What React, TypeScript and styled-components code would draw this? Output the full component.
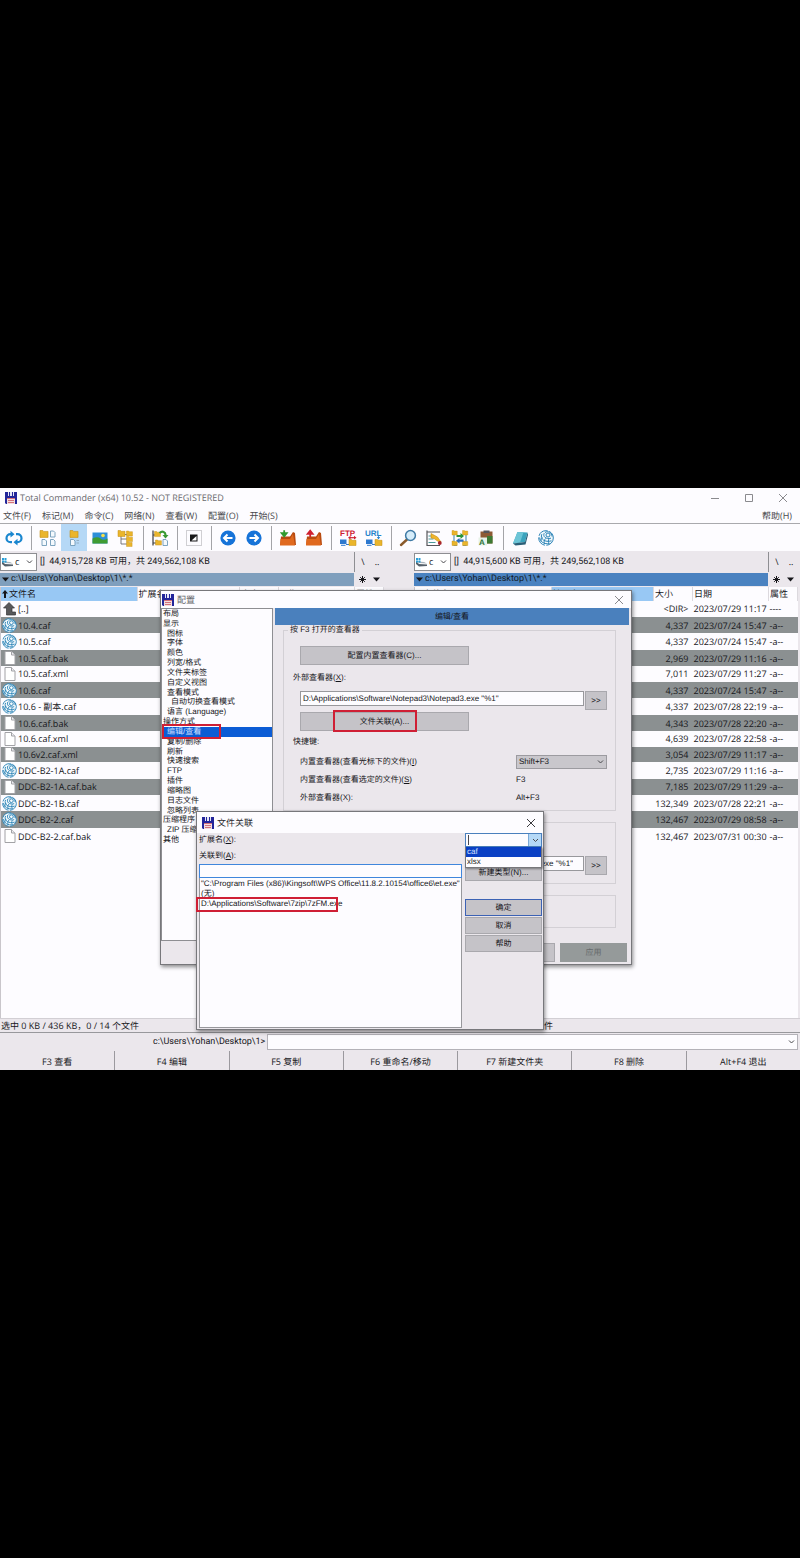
import React from 'react';
import styled, { createGlobalStyle, css } from 'styled-components';

const GlobalStyle = createGlobalStyle`
  * { box-sizing: border-box; }
  body { margin: 0; background: #000; text-rendering: geometricPrecision; }
  button, input, select { font: inherit; color: inherit; margin: 0; padding: 0; border-radius: 0; text-rendering: inherit; }
  svg { display: block; flex: none; }
`;

const Page = styled.div`
  min-height: 100vh;
  display: flex;
  flex-direction: column;
  justify-content: center;
  background: #000;
`;

const AppWindow = styled.main`
  position: relative;
  display: flex;
  flex-direction: column;
  min-width: 800px;
  background: #ebe7ec;
  color: #18181c;
  font: 9px/14px 'Open Sans', 'Noto Sans CJK SC', sans-serif;
  overflow: hidden;
`;

const narrowText = css`
  font-family: Roboto, 'Noto Sans CJK SC', sans-serif;
`;

const TitleBar = styled.header`
  display: flex;
  align-items: center;
  gap: 3px;
  height: 19px;
  padding: 0 12px 0 5px;
  background: #fdfcff;
  color: #6a6a6e;
`;

const WindowTitle = styled.h1`
  flex: 1;
  margin: 0;
  font-size: 9px;
  font-weight: 400;
`;

const WindowControls = styled.div`
  display: flex;
  gap: 24px;
`;

const PlainButton = styled.button`
  display: flex;
  align-items: center;
  justify-content: center;
  background: none;
  border: 0;
`;

const MenuBar = styled.nav`
  display: flex;
  gap: 11px;
  height: 16px;
  padding: 1px 8px 0 3px;
  background: #fdfcff;
  color: #4a4a4e;
`;

const MenuSpacer = styled.span`
  flex: 1;
`;

const ToolBar = styled.div`
  display: flex;
  align-items: center;
  height: 28px;
  padding-left: 1px;
  background: #fdfcff;
  border-top: 1px solid #a9a9ad;
`;

const ToolButton = styled(PlainButton)<{ $active?: boolean }>`
  width: 26px;
  height: 27px;
  background: ${(p) => (p.$active ? '#b5d8f6' : 'none')};
`;

const ToolDivider = styled.span`
  width: 8px;
  height: 24px;
  background: linear-gradient(#a4a4a8, #a4a4a8) center / 1px 24px no-repeat;
`;

const Panels = styled.div`
  display: grid;
  grid-template-columns: 1fr 30px 1fr;
  padding: 0 2px 0 0;
`;

const Panel = styled.section`
  display: flex;
  flex-direction: column;
  min-width: 0;
`;

const DriveBar = styled.div`
  display: flex;
  align-items: center;
  gap: 3px;
  height: 22px;
`;

const DriveSelectBox = styled.div`
  position: relative;
  display: flex;
  align-items: center;
  width: 37px;
  height: 18px;
  background: #fff;
  border: 1px solid #8e8e92;
`;

const DriveSelect = styled.select`
  appearance: none;
  width: 100%;
  height: 16px;
  padding-left: 14px;
  background: none;
  border: 0;
`;

const SelectArrow = styled.span`
  position: absolute;
  right: 3px;
  top: 50%;
  transform: translateY(-50%);
  pointer-events: none;
`;

const DriveGlyph = styled.span`
  position: absolute;
  left: 1px;
  top: 4px;
  pointer-events: none;
`;

const DriveInfo = styled.span`
  flex: 1;
  white-space: pre;
  ${narrowText}
`;

const DriveLinks = styled.div`
  display: flex;
  align-items: center;
  gap: 4px;
  width: 30px;
  height: 20px;
  padding-left: 3px;
  border-left: 1px solid #8e8e92;
`;

const SmallButton = styled(PlainButton)`
  width: 10px;
  height: 12px;
`;

const PathRow = styled.div`
  display: flex;
  height: 14px;
  padding-bottom: 1px;
`;

const PathBar = styled.div<{ $active?: boolean }>`
  flex: 1;
  display: flex;
  align-items: center;
  gap: 2px;
  padding-left: 2px;
  line-height: 13px;
  background: ${(p) => (p.$active ? '#4a82c0' : '#7f9fbd')};
  color: #141c28;
  ${narrowText}
`;

const PathTools = styled.div`
  display: flex;
  align-items: center;
  gap: 4px;
  width: 30px;
  padding-left: 3px;
`;

const FileArea = styled.div`
  min-height: 431px;
  background: #fdfcff;
  border-left: 1px solid #c9c6cb;
`;

const FileTable = styled.table`
  width: 100%;
  height: 257px;
  border-collapse: collapse;
  table-layout: fixed;
  line-height: 13px;
  white-space: nowrap;
`;

const HeadCell = styled.th<{ $sorted?: boolean; $w?: number }>`
  width: ${(p) => (p.$w ? `${p.$w}px` : 'auto')};
  height: 14px;
  padding: 0 1px;
  text-align: left;
  font-weight: 400;
  line-height: 13px;
  vertical-align: top;
  background: ${(p) => (p.$sorted ? '#98c8f4' : '#fdfcff')};
  border-right: 1px solid #dcd9de;
`;

const HeadLabel = styled.span`
  display: flex;
  align-items: center;
  gap: 1px;
`;

const FileRow = styled.tr<{ $shaded: boolean }>`
  ${(p) => p.$shaded && css`background: #8b9091;`}
`;

const Cell = styled.td<{ $right?: boolean }>`
  padding: 0 ${(p) => (p.$right ? 4 : 1)}px 0 1px;
  text-align: ${(p) => (p.$right ? 'right' : 'left')};
`;

const FileName = styled.span`
  display: flex;
  align-items: center;
  gap: 1px;
`;

const StatusBar = styled.div`
  display: grid;
  grid-template-columns: 1fr 30px 1fr;
  height: 15px;
  padding: 0 1px;
  border-top: 1px solid #d2cfd4;
  border-bottom: 1px solid #98989c;
`;

const StatusText = styled.span<{ $second?: boolean }>`
  grid-column: ${(p) => (p.$second ? 3 : 1)};
  white-space: nowrap;
  line-height: 13px;
`;

const CommandLine = styled.label`
  display: grid;
  grid-template-columns: 1fr 2fr;
  align-items: center;
  gap: 2px;
  height: 18px;
  padding-right: 2px;
  text-align: right;
  ${narrowText}
`;

const CommandBox = styled.span`
  position: relative;
  display: flex;
`;

const CommandInput = styled.input`
  width: 100%;
  height: 16px;
  background: #fdfcff;
  border: 1px solid #b4b2b8;
`;

const KeyBar = styled.div`
  display: grid;
  grid-template-columns: repeat(7, 1fr);
  height: 19px;
`;

const KeyButton = styled(PlainButton)`
  height: 19px;
  padding-top: 3px;
  line-height: 14px;
  & + & { border-left: 1px solid #9b999e; }
`;

/* ---------- dialogs ---------- */

const Dialog = styled.section<{ $x: number; $y: number; $w: number; $h: number }>`
  position: absolute;
  left: ${(p) => p.$x}px;
  top: ${(p) => p.$y}px;
  width: ${(p) => p.$w}px;
  height: ${(p) => p.$h}px;
  display: flex;
  flex-direction: column;
  background: #ebe7ec;
  border: 1px solid #77777b;
  box-shadow: 1px 2px 4px rgba(0, 0, 0, 0.45);
  font: 8px/10px 'Liberation Sans', 'Noto Sans CJK SC', sans-serif;
  color: #141418;
`;

const DialogTitle = styled.header<{ $h: number; $muted?: boolean }>`
  display: flex;
  align-items: center;
  gap: 3px;
  height: ${(p) => p.$h}px;
  flex: none;
  padding: 0 7px 0 ${(p) => (p.$muted ? 1 : 5)}px;
  background: #fdfcff;
  color: ${(p) => (p.$muted ? '#66666a' : '#2a2a2e')};
`;

const DialogName = styled.h2`
  flex: 1;
  margin: 0;
  font: 9px/12px 'Open Sans', 'Noto Sans CJK SC', sans-serif;
`;

const ConfigBody = styled.div`
  flex: 1;
  display: flex;
  gap: 2px;
  padding-right: 2px;
`;

const TreeBox = styled.div`
  position: relative;
  width: 112px;
  height: 333px;
  background: #fdfcff;
  border: 1px solid #8e8e92;
`;

const Tree = styled.ul`
  display: grid;
  grid-auto-rows: minmax(0, 1fr);
  height: 236px;
  margin: 0;
  padding: 0;
  list-style: none;
`;

const TreeItem = styled.li<{ $level: number; $selected?: boolean }>`
  padding-left: ${(p) => 1 + p.$level * 4}px;
  white-space: nowrap;
  ${(p) => p.$selected && css`background: #0b5cd5; color: #cfe0ff;`}
`;

const Highlight = styled.span<{ $x: number; $y: number; $w: number; $h: number }>`
  position: absolute;
  left: ${(p) => p.$x}px;
  top: ${(p) => p.$y}px;
  width: ${(p) => p.$w}px;
  height: ${(p) => p.$h}px;
  border: 2px solid #cf1f35;
  pointer-events: none;
`;

const ConfigPage = styled.div`
  flex: 1;
  display: flex;
  flex-direction: column;
`;

const PageBanner = styled.h3`
  margin: 0 0 5px;
  height: 17px;
  background: #4a80bd;
  text-align: center;
  font-size: 8px;
  line-height: 17px;
  font-weight: 400;
`;

const Group = styled.div<{ $h: number; $top?: number }>`
  position: relative;
  height: ${(p) => p.$h}px;
  margin: 0 13px 11px 8px;
  padding: ${(p) => p.$top ?? 15}px 8px 0 16px;
  border: 1px solid #d3d0d5;
`;

const Legend = styled.span`
  position: absolute;
  top: -6px;
  left: 4px;
  padding: 0 2px;
  background: #ebe7ec;
`;

const GreyButton = styled.button<{ $w?: number; $h: number; $default?: boolean }>`
  display: flex;
  align-items: center;
  justify-content: center;
  flex: none;
  width: ${(p) => (p.$w ? `${p.$w}px` : '100%')};
  height: ${(p) => p.$h}px;
  background: #c5c3c8;
  border: 1px solid ${(p) => (p.$default ? '#3c62b4' : '#a9a8ad')};
  &:disabled { background: #959a9a; color: #676b6d; border-color: #959a9a; }
`;

const FieldLabel = styled.label`
  display: block;
  margin: 8px 0 8px -7px;
`;

const FieldRow = styled.div`
  display: flex;
  gap: 1px;
  height: 21px;
`;

const PathInput = styled.input<{ $end?: boolean }>`
  flex: 1;
  min-width: 0;
  height: 15px;
  padding: 0 ${(p) => (p.$end ? 10 : 2)}px 0 2px;
  text-align: ${(p) => (p.$end ? 'right' : 'left')};
  background: #fdfcff;
  border: 1px solid #98989c;
`;

const SubTitle = styled.p`
  margin: 6px 0 6px -7px;
`;

const ShortcutRow = styled.div`
  display: grid;
  grid-template-columns: 1fr 91px;
  align-items: center;
  height: 18px;
`;

const ShortcutSelectBox = styled.span`
  position: relative;
`;

const ShortcutSelect = styled.select`
  display: block;
  appearance: none;
  width: 100%;
  height: 14px;
  padding-left: 2px;
  background: #c9c7cc;
  border: 1px solid #9c9ba0;
`;

const ButtonRow = styled.div`
  display: flex;
  justify-content: flex-end;
  gap: 5px;
  margin-top: auto;
  padding: 0 2px 2px 0;
`;

const AssocBody = styled.div`
  flex: 1;
  display: grid;
  grid-template-columns: 1fr 77px;
  gap: 3px;
  padding: 0 1px 1px 2px;
`;

const AssocMain = styled.div`
  position: relative;
  display: flex;
  flex-direction: column;
`;

const AssocLabel = styled.label`
  height: 15px;
  padding-top: 2px;
  & + & { height: 16px; padding-top: 3px; }
`;

const AssocInput = styled.input`
  height: 14px;
  flex: none;
  background: #fdfcff;
  border: 1px solid #3f86dc;
`;

const AssocList = styled.ul`
  flex: 1;
  margin: 0;
  padding: 1px 1px 0;
  list-style: none;
  background: #fdfcff;
  border: 1px solid #98989c;
  border-top: 0;
  white-space: nowrap;
`;

const AssocSide = styled.div`
  position: relative;
  display: flex;
  flex-direction: column;
  gap: 1px;
`;

const Combo = styled.div`
  display: flex;
  height: 14px;
  margin-bottom: 16px;
  border: 1px solid #4a80bd;
  background: #fdfcff;
`;

const ComboInput = styled.input`
  flex: 1;
  min-width: 0;
  padding: 0;
  background: linear-gradient(#4a4a4e, #4a4a4e) 2px 1px / 1px 10px no-repeat;
  border: 0;
`;

const ComboButton = styled(PlainButton)`
  width: 13px;
  background: #b5d8f6;
  border-left: 1px solid #7aa9d8;
`;

const Options = styled.ul`
  position: absolute;
  left: 0;
  top: 14px;
  width: 77px;
  margin: 0;
  padding: 0;
  list-style: none;
  background: #fdfcff;
  border: 1px solid #77777b;
  border-top: 0;
  box-shadow: 1px 1px 2px rgba(0, 0, 0, 0.4);
`;

const Option = styled.li<{ $on?: boolean }>`
  padding-left: 1px;
  background: ${(p) => (p.$on ? '#0a3fc4' : '#fdfcff')};
  color: ${(p) => (p.$on ? '#d5e0ff' : '#1c1c20')};
`;

const SideGap = styled.span`
  height: 16px;
`;

/* ---------- drawings ---------- */

const Floppy = ({ size = 12 }: { size?: number }) => (
  <svg width={size} height={size} viewBox="0 0 12 12">
    <path d="M0 0h12v12H1L0 11z" fill="#23259a" />
    <path d="M3 0h6v4H3z" fill="#e6e6f6" />
    <path d="M4 0h1v4H4zM7 0h1v4H7z" fill="#23259a" />
    <path d="M2 6h8v6H2z" fill="#f3dede" />
    <path d="M2 6h8v1H2zM3 8h6v1H3zM3 10h6v1H3z" fill="#d4727b" />
  </svg>
);

const Chevron = ({ w = 7 }: { w?: number }) => (
  <svg width={w} height={w} viewBox="0 0 7 7" fill="none" stroke="#4a4a4e" strokeWidth="1">
    <path d="M1 2l2.500 2.500L6 2" />
  </svg>
);

const Triangle = () => (
  <svg width="7" height="5" viewBox="0 0 7 5"><path d="M0 .5h7L3.500 4.500z" fill="#16161a" /></svg>
);

const Star = () => (
  <svg width="7" height="7" viewBox="0 0 7 7" stroke="#16161a" strokeWidth="1">
    <path d="M3.500 0v7M0 3.500h7M1.200 1.200l4.600 4.600M5.800 1.200L1.200 5.800" />
  </svg>
);

const Cross = ({ color = '#8a8a8e' }: { color?: string }) => (
  <svg width="10" height="10" viewBox="0 0 10 10" stroke={color} strokeWidth="1"><path d="M1 1l8 8M9 1L1 9" /></svg>
);

const Drive = () => (
  <svg width="12" height="9" viewBox="0 0 12 9">
    <path d="M0 3l3 3 8 .5V8L3 8.500 0 6z" fill="#55606a" />
    <path d="M0 2.500L3 5l8 .5-3-1.500-3-.2z" fill="#aab4bc" />
    <path d="M0 0h2v2H0zM2.500 0h2v2h-2zM0 2.500h2v2H0zM2.500 2.500h2v2h-2z" fill="#2a9fd8" />
  </svg>
);

const Globe = ({ size = 15 }: { size?: number }) => (
  <svg width={size} height={size} viewBox="0 0 16 16" fill="none" stroke="#2d84b8" strokeWidth="1">
    <circle cx="8" cy="8" r="7.300" fill="#f1f8fc" strokeDasharray="11 1.500" />
    <circle cx="10" cy="5" r="2" />
    <path d="M6.200 3.200c-1.600 3.300 1.600 6.300 6.800 5M3.800 4.200C1.800 9 7 12.800 13.500 10.800M1.700 7.500C2 12 6.500 14.500 11.500 13.500" />
    <path d="M7 2.500c3-2 7 0 7 4M7.500 8.500c-1.500 1.700-1.700 3.500-.8 5.500M11 8.800c-.8 1.500-.8 3 0 4.500M4.500 7.500c-1.200 1.200-1.600 2.500-1.300 4" />
  </svg>
);

const Sheet = () => (
  <svg width="15" height="14" viewBox="0 0 15 14">
    <path d="M3 .5h6.500l3.500 3.500v9.500h-10z" fill="#fff" stroke="#a2a2a6" />
    <path d="M9.500 .5v3.500h3.500" fill="#ececf0" stroke="#a2a2a6" />
  </svg>
);

const UpArrow = () => (
  <svg width="15" height="14" viewBox="0 0 15 14">
    <path d="M7 .5l5.500 5.500H10v4h3.500v3H4.500v-7H1.500z" fill="#58585a" stroke="#343436" strokeWidth=".7" />
  </svg>
);

const SortArrow = () => (
  <svg width="6" height="8" viewBox="0 0 6 8"><path d="M3 0l3 3.500H4V8H2V3.500H0z" fill="#16161a" /></svg>
);

const Folder = ({ x, y, s = 1 }: { x: number; y: number; s?: number }) => (
  <g transform={`translate(${x} ${y}) scale(${s})`}>
    <path d="M0 0h2.500l.7.8H7V6H0z" fill="#eab52c" stroke="#c38d13" strokeWidth=".5" />
  </g>
);

const MiniPage = ({ x, y }: { x: number; y: number }) => (
  <path transform={`translate(${x} ${y})`} d="M0 0h3l1.500 1.500V6H0z" fill="#f4f9fd" stroke="#6f9ab8" strokeWidth=".9" />
);

const Ico = ({ children }: { children: React.ReactNode }) => (
  <svg width="18" height="18" viewBox="0 0 18 18" fill="none">{children}</svg>
);

const icons: Record<string, React.ReactNode> = {
  refresh: (
    <Ico>
      <path d="M7 13.200H5.500a4 4 0 0 1 0-8H6M11 5.200h1.500a4 4 0 0 1 0 8H12" stroke="#1a86cf" strokeWidth="2.200" />
      <path d="M5.500 1.800L9.500 5.200 5.500 8.600zM12.500 9.800L8.500 13.200l4 3.400z" fill="#1a86cf" />
    </Ico>
  ),
  brief: (
    <Ico><Folder x={1} y={1.500} s={1.150} /><MiniPage x={11.500} y={2} /><MiniPage x={3} y={10.500} /><MiniPage x={11.500} y={10.500} /></Ico>
  ),
  full: (
    <Ico><Folder x={5} y={1.500} s={1.150} /><MiniPage x={5.500} y={10.500} /><path d="M11.500 11.500h2.500M11.500 14h2.500" stroke="#8aa5b8" strokeWidth=".8" /></Ico>
  ),
  image: (
    <Ico>
      <path d="M1.500 3.500h15v11h-15z" fill="#2d8fd8" />
      <path d="M1.500 9.500q5-2.500 8 0t7 0v5h-15z" fill="#3f9c33" />
      <circle cx="12" cy="6.500" r="1.800" fill="#f6e04b" />
    </Ico>
  ),
  tree: (
    <Ico>
      <path d="M4 5v10h6M4 5.500h6M4 10h6" stroke="#6a6a6e" strokeWidth=".9" />
      <Folder x={1} y={1.500} /><Folder x={9.500} y={2} s={0.850} /><Folder x={9.500} y={7.500} s={0.850} /><Folder x={9.500} y={12.800} s={0.800} />
    </Ico>
  ),
  branch: (
    <Ico>
      <path d="M2 1.500v15M2 6h3M2 14h4" stroke="#3a3a3e" strokeWidth="1.200" />
      <Folder x={3.500} y={2.500} s={0.850} /><Folder x={4.500} y={11} s={0.850} />
      <path d="M8.500 4c3-2.500 6-1 6 2" stroke="#3a9a33" strokeWidth="2.200" /><path d="M11.500 6h6l-3 3.500z" fill="#3a9a33" />
      <MiniPage x={12} y={10.500} />
    </Ico>
  ),
  invert: (
    <Ico>
      <path d="M1.500 1.500h15v15h-15z" stroke="#a2a2a6" strokeDasharray="1 1" />
      <path d="M5 5.500h7.500v7H5z" fill="#18181a" /><path d="M6.500 11.500l5-4.500v4.500z" fill="#fff" />
    </Ico>
  ),
  back: (
    <Ico><circle cx="9" cy="9" r="7.600" fill="#1673d8" /><path d="M13.500 9H6M8.500 5.500L5 9l3.500 3.500" stroke="#fff" strokeWidth="2" /></Ico>
  ),
  forward: (
    <Ico><circle cx="9" cy="9" r="7.600" fill="#1673d8" /><path d="M4.500 9H12M9.500 5.500L13 9l-3.500 3.500" stroke="#fff" strokeWidth="2" /></Ico>
  ),
  pack: (
    <Ico>
      <path d="M2 7.500h9l3-4.500 2 1 1 12H1z" fill="#b84a10" /><path d="M1.500 10h9.500l3-5 2 11.500h-15z" fill="#e0691f" />
      <path d="M5.200 1.200v4M2.700 4.200L5.200 7.400l2.500-3.200z" stroke="#2f9a2f" fill="#2f9a2f" strokeWidth="1.800" />
    </Ico>
  ),
  unpack: (
    <Ico>
      <path d="M2 7.500h9l3-4.500 2 1 1 12H1z" fill="#b84a10" /><path d="M1.500 10h9.500l3-5 2 11.500h-15z" fill="#e0691f" />
      <path d="M5.200 8V4M2.700 4.800l2.500-3.200 2.500 3.200z" stroke="#cf2030" fill="#cf2030" strokeWidth="1.800" />
    </Ico>
  ),
  ftp: (
    <Ico>
      <text x="1" y="7" fontSize="8" fontWeight="700" fontFamily="Liberation Sans, sans-serif" fill="#cf2030">FTP</text>
      <path d="M1 10.500h6.500v4.500H1z" fill="#2d78cf" /><path d="M2 16.300h4.500M7 15.500h3.500" stroke="#2d78cf" /><Folder x={10} y={10.500} />
      <path d="M10.500 8.700h5" stroke="#cf2030" strokeWidth="1.200" /><path d="M11.500 6.800v3.800l-2.500-1.900zM15 6.800v3.800l2.500-1.900z" fill="#cf2030" />
    </Ico>
  ),
  url: (
    <Ico>
      <text x="0" y="7" fontSize="8" fontWeight="700" fontFamily="Liberation Sans, sans-serif" fill="#2584cc">URL</text>
      <path d="M1 10.500h6.500v4.500H1z" fill="#2d78cf" /><path d="M2 16.300h4.500M7 15.500h3.500" stroke="#2d78cf" /><Folder x={10} y={10.500} />
      <path d="M13.500 7.200v3M12 8.700h3" stroke="#2584cc" strokeWidth="1" />
    </Ico>
  ),
  search: (
    <Ico>
      <path d="M8 10.500L2 16" stroke="#8a5a2c" strokeWidth="2.400" strokeLinecap="round" />
      <circle cx="11.500" cy="6.500" r="4.900" fill="#d5ecfa" stroke="#3f7aa5" strokeWidth="1.500" />
    </Ico>
  ),
  rename: (
    <Ico>
      <path d="M2 1.500v15h13M2 3h13" stroke="#55555a" strokeWidth="1.200" /><path d="M3.500 7h3M3.500 10h5M3.500 13.500h7" stroke="#4a9a9a" />
      <path d="M6 4.500l6.500 3.500 3.500 5-3.500-1L9 9.500 6 9z" fill="#f0b52c" stroke="#c38d13" strokeWidth=".6" /><circle cx="14.800" cy="14" r="1.900" fill="#a8262c" />
    </Ico>
  ),
  sync: (
    <Ico>
      <path d="M3 2v14.500h3M15 2v14.500h-3" stroke="#5a94b8" strokeWidth="1.200" /><Folder x={1} y={1.500} s={0.750} /><Folder x={11.500} y={1.500} s={0.750} /><Folder x={1} y={12} s={0.750} /><Folder x={11.500} y={12} s={0.750} />
      <path d="M5.500 6h4V4l3.500 3-3.500 3V8h-4z" fill="#2c9338" /><path d="M12.500 10.500h-4V9L5 11.700l3.500 2.800v-1.700h4z" fill="#2c6fc0" />
    </Ico>
  ),
  clip: (
    <Ico>
      <path d="M3.500 2.500h12v12h-12z" fill="#8d5a34" /><path d="M6.500 1.500h6v2.500h-6z" fill="#55555a" /><path d="M10 7h5.500v7.500H10z" fill="#3d7a33" />
      <path d="M1.500 8.500H10v8H1.500z" fill="#e7f2e7" />
      <text x="2" y="15.500" fontSize="8" fontWeight="700" fontFamily="Liberation Sans, sans-serif" fill="#2c7338">A</text>
    </Ico>
  ),
  note: (
    <Ico>
      <path d="M6.500 3l10 .5-2.500 9.500-12 1.500z" fill="#3aa3bd" /><path d="M6.500 3l6 .3-3.500 10.500-7 .7z" fill="#6cc4d6" />
      <path d="M2 14.500l12-1.500 2.500-9.500.5 2.500-2.500 9.500-10 1z" fill="#2b5f78" />
    </Ico>
  ),
  globe: <Globe size={16} />,
};

/* ---------- data ---------- */

const toolGroups = [
  ['refresh'], ['brief', 'full', 'image', 'tree'], ['branch'], ['invert'], ['back', 'forward'],
  ['pack', 'unpack'], ['ftp', 'url'], ['search', 'rename', 'sync', 'clip'], ['note', 'globe'],
];

const files: [string, string, string, string][] = [
  ['[..]', '<DIR>', '2023/07/29 11:17', '----'],
  ['10.4.caf', '4,337', '2023/07/24 15:47', '-a--'],
  ['10.5.caf', '4,337', '2023/07/24 15:47', '-a--'],
  ['10.5.caf.bak', '2,969', '2023/07/29 11:16', '-a--'],
  ['10.5.caf.xml', '7,011', '2023/07/29 11:27', '-a--'],
  ['10.6.caf', '4,337', '2023/07/24 15:47', '-a--'],
  ['10.6 - 副本.caf', '4,337', '2023/07/28 22:19', '-a--'],
  ['10.6.caf.bak', '4,343', '2023/07/28 22:20', '-a--'],
  ['10.6.caf.xml', '4,639', '2023/07/28 22:58', '-a--'],
  ['10.6v2.caf.xml', '3,054', '2023/07/29 11:17', '-a--'],
  ['DDC-B2-1A.caf', '2,735', '2023/07/29 11:16', '-a--'],
  ['DDC-B2-1A.caf.bak', '7,185', '2023/07/29 11:29', '-a--'],
  ['DDC-B2-1B.caf', '132,349', '2023/07/28 22:21', '-a--'],
  ['DDC-B2-2.caf', '132,467', '2023/07/29 08:58', '-a--'],
  ['DDC-B2-2.caf.bak', '132,467', '2023/07/31 00:30', '-a--'],
];

const tree: [string, number][] = [
  ['布局', 0], ['显示', 0], ['图标', 1], ['字体', 1], ['颜色', 1], ['列宽/格式', 1], ['文件夹标签', 1],
  ['自定义视图', 1], ['查看模式', 1], ['自动切换查看模式', 2], ['语言 (Language)', 1], ['操作方式', 0],
  ['编辑/查看', 1], ['复制/删除', 1], ['刷新', 1], ['快速搜索', 1], ['FTP', 1], ['插件', 1], ['缩略图', 1],
  ['日志文件', 1], ['忽略列表', 1], ['压缩程序', 0], ['ZIP 压缩程序', 1], ['其他', 0],
];

const menus = ['文件(F)', '标记(M)', '命令(C)', '网络(N)', '查看(W)', '配置(O)', '开始(S)'];
const keys = ['F3 查看', 'F4 编辑', 'F5 复制', 'F6 重命名/移动', 'F7 新建文件夹', 'F8 删除', 'Alt+F4 退出'];

const fileIcon = (name: string) => {
  if (name === '[..]') return <UpArrow />;
  return name.endsWith('.caf') ? <Globe /> : <Sheet />;
};

function FilePanel({ free, active }: { free: string; active?: boolean }) {
  return (
    <Panel>
      <DriveBar>
        <DriveSelectBox>
          <DriveGlyph><Drive /></DriveGlyph>
          <DriveSelect aria-label="驱动器"><option>c</option></DriveSelect>
          <SelectArrow><Chevron /></SelectArrow>
        </DriveSelectBox>
        <DriveInfo>{`[]  ${free} KB 可用，共 249,562,108 KB`}</DriveInfo>
        <DriveLinks><SmallButton>\</SmallButton><SmallButton>..</SmallButton></DriveLinks>
      </DriveBar>
      <PathRow>
        <PathBar $active={active}><Triangle />c:\Users\Yohan\Desktop\1\*.*</PathBar>
        <PathTools>
          <SmallButton aria-label="收藏夹"><Star /></SmallButton>
          <SmallButton aria-label="历史"><Triangle /></SmallButton>
        </PathTools>
      </PathRow>
      <FileArea>
        <FileTable>
          <thead>
            <tr>
              <HeadCell $w={136} $sorted={!active}><HeadLabel><SortArrow />文件名</HeadLabel></HeadCell>
              <HeadCell $sorted={active}>扩展名</HeadCell>
              <HeadCell $w={39}>大小</HeadCell>
              <HeadCell $w={76}>日期</HeadCell>
              <HeadCell $w={29}>属性</HeadCell>
            </tr>
          </thead>
          <tbody>
            {files.map(([name, size, date, attr], i) => (
              <FileRow key={name} $shaded={i % 2 === 1 && i < 14}>
                <Cell colSpan={2}><FileName>{fileIcon(name)}{name}</FileName></Cell>
                <Cell $right>{size}</Cell>
                <Cell>{date}</Cell>
                <Cell>{attr}</Cell>
              </FileRow>
            ))}
          </tbody>
        </FileTable>
      </FileArea>
    </Panel>
  );
}

function ConfigDialog() {
  return (
    <Dialog $x={160} $y={102} $w={472} $h={375} aria-label="配置">
      <DialogTitle $h={17} $muted>
        <Floppy /><DialogName>配置</DialogName><PlainButton aria-label="关闭"><Cross /></PlainButton>
      </DialogTitle>
      <ConfigBody>
        <TreeBox>
          <Tree>
            {tree.map(([label, level]) => (
              <TreeItem key={label} $level={level} $selected={label === '编辑/查看'}>{label}</TreeItem>
            ))}
          </Tree>
          <Highlight $x={0} $y={115} $w={59} $h={15} />
        </TreeBox>
        <ConfigPage>
          <PageBanner>编辑/查看</PageBanner>
          <Group $h={181}>
            <Legend>按 F3 打开的查看器</Legend>
            <GreyButton $w={169} $h={19}>配置内置查看器(C)...</GreyButton>
            <FieldLabel htmlFor="viewer">外部查看器(<u>X</u>):</FieldLabel>
            <FieldRow>
              <PathInput id="viewer" defaultValue={'D:\\Applications\\Software\\Notepad3\\Notepad3.exe "%1"'} />
              <GreyButton $w={22} $h={19}>&gt;&gt;</GreyButton>
            </FieldRow>
            <GreyButton $w={169} $h={19}>文件关联(A)...</GreyButton>
            <Highlight $x={49} $y={79} $w={84} $h={22} />
            <SubTitle>快捷键:</SubTitle>
            <ShortcutRow>
              <label htmlFor="shortcut">内置查看器(查看光标下的文件)(<u>I</u>)</label>
              <ShortcutSelectBox>
                <ShortcutSelect id="shortcut"><option>Shift+F3</option></ShortcutSelect>
                <SelectArrow><Chevron /></SelectArrow>
              </ShortcutSelectBox>
            </ShortcutRow>
            <ShortcutRow><span>内置查看器(查看选定的文件)(<u>S</u>)</span><span>F3</span></ShortcutRow>
            <ShortcutRow><span>外部查看器(X):</span><span>Alt+F3</span></ShortcutRow>
          </Group>
          <Group $h={62} $top={7}>
            <FieldLabel htmlFor="editor">编辑器:</FieldLabel>
            <FieldRow>
              <PathInput id="editor" $end defaultValue={'Notepad3.exe "%1"'} />
              <GreyButton $w={22} $h={19}>&gt;&gt;</GreyButton>
            </FieldRow>
          </Group>
          <Group $h={33} />
          <ButtonRow>
            <GreyButton $w={67} $h={19}>确定</GreyButton>
            <GreyButton $w={67} $h={19} disabled>应用</GreyButton>
          </ButtonRow>
        </ConfigPage>
      </ConfigBody>
    </Dialog>
  );
}

function AssociationDialog() {
  return (
    <Dialog $x={196} $y={323} $w={348} $h={219} aria-label="文件关联">
      <DialogTitle $h={21}>
        <Floppy /><DialogName>文件关联</DialogName><PlainButton aria-label="关闭"><Cross color="#3a3a3e" /></PlainButton>
      </DialogTitle>
      <AssocBody>
        <AssocMain>
          <AssocLabel htmlFor="ext">扩展名(<u>X</u>):</AssocLabel>
          <AssocLabel htmlFor="target">关联到(<u>A</u>):</AssocLabel>
          <AssocInput id="target" />
          <AssocList>
            <li>"C:\Program Files (x86)\Kingsoft\WPS Office\11.8.2.10154\office6\et.exe"</li>
            <li>(无)</li>
            <li>D:\Applications\Software\7zip\7zFM.exe</li>
          </AssocList>
          <Highlight $x={-3} $y={64} $w={142} $h={15} />
        </AssocMain>
        <AssocSide>
          <Combo>
            <ComboInput id="ext" />
            <ComboButton aria-label="展开"><Chevron /></ComboButton>
          </Combo>
          <GreyButton $h={17}>新建类型(N)...</GreyButton>
          <SideGap />
          <GreyButton $h={17} $default>确定</GreyButton>
          <GreyButton $h={17}>取消</GreyButton>
          <GreyButton $h={17}>帮助</GreyButton>
          <Options>
            <Option $on>caf</Option>
            <Option>xlsx</Option>
          </Options>
        </AssocSide>
      </AssocBody>
    </Dialog>
  );
}

export default function App() {
  return (
    <Page>
      <GlobalStyle />
      <AppWindow>
        <TitleBar>
          <Floppy />
          <WindowTitle>Total Commander (x64) 10.52 - NOT REGISTERED</WindowTitle>
          <WindowControls>
            <PlainButton aria-label="最小化">
              <svg width="10" height="10" viewBox="0 0 10 10" stroke="#8a8a8e"><path d="M1 5.500h8" /></svg>
            </PlainButton>
            <PlainButton aria-label="最大化">
              <svg width="10" height="10" viewBox="0 0 10 10" stroke="#8a8a8e" fill="none"><path d="M1.500 1.500h7v7h-7z" /></svg>
            </PlainButton>
            <PlainButton aria-label="关闭"><Cross /></PlainButton>
          </WindowControls>
        </TitleBar>
        <MenuBar>
          {menus.map((m) => <PlainButton key={m}>{m}</PlainButton>)}
          <MenuSpacer />
          <PlainButton>帮助(H)</PlainButton>
        </MenuBar>
        <ToolBar>
          {toolGroups.map((group, g) => (
            <React.Fragment key={group[0]}>
              {g > 0 && <ToolDivider />}
              {group.map((name) => (
                <ToolButton key={name} $active={name === 'full'} aria-label={name}>{icons[name]}</ToolButton>
              ))}
            </React.Fragment>
          ))}
        </ToolBar>
        <Panels>
          <FilePanel free="44,915,728" />
          <span />
          <FilePanel free="44,915,600" active />
        </Panels>
        <StatusBar>
          <StatusText>选中 0 KB / 436 KB，0 / 14 个文件</StatusText>
          <StatusText $second>选中 0 KB / 436 KB，0 / 14 个文件</StatusText>
        </StatusBar>
        <CommandLine>
          c:\Users\Yohan\Desktop\1&gt;
          <CommandBox>
            <CommandInput />
            <SelectArrow><Chevron /></SelectArrow>
          </CommandBox>
        </CommandLine>
        <KeyBar>{keys.map((k) => <KeyButton key={k}>{k}</KeyButton>)}</KeyBar>
        <ConfigDialog />
        <AssociationDialog />
      </AppWindow>
    </Page>
  );
}
